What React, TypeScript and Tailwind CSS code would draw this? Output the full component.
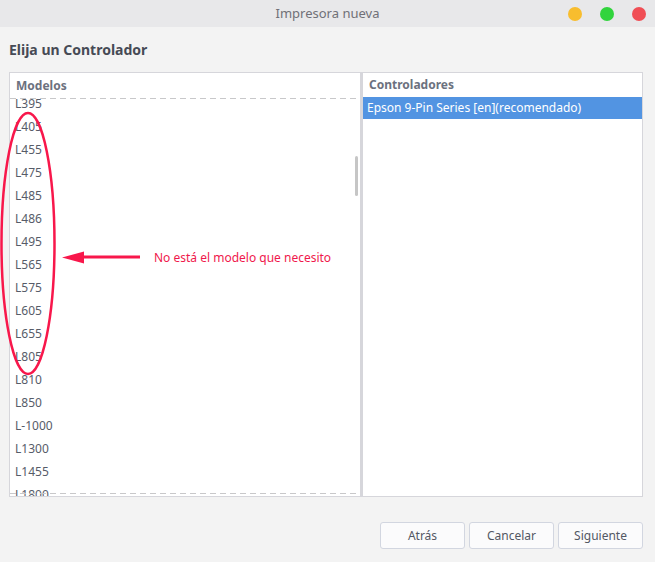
import React from "react";

const models = [
  "L395", "L405", "L455", "L475", "L485", "L486", "L495", "L565", "L575",
  "L605", "L655", "L805", "L810", "L850", "L-1000", "L1300", "L1455", "L1800",
];

export default function App() {
  return (
    <div
      className="relative w-[655px] h-[562px] bg-[#f3f3f3] overflow-hidden"
      style={{ fontFamily: '"Noto Sans", "Open Sans", sans-serif' }}
    >
      {/* Title bar */}
      <div className="relative h-[27px] bg-[#e8e8ea] flex items-center justify-center">
        <span className="text-[13px] text-[#707077]">Impresora nueva</span>
        <div className="absolute right-[9px] top-[7px] flex gap-[18px]">
          <span className="block w-[14px] h-[14px] rounded-full bg-[#f8bd2e]" />
          <span className="block w-[14px] h-[14px] rounded-full bg-[#31d43d]" />
          <span className="block w-[14px] h-[14px] rounded-full bg-[#f04e55]" />
        </div>
      </div>

      {/* Heading */}
      <div className="h-[45px] flex items-center pl-[9px]">
        <span className="text-[14px] font-bold text-[#464a55]">Elija un Controlador</span>
      </div>

      {/* Panels */}
      <div className="flex pl-[9px] h-[425px]">
        {/* Left panel */}
        <div className="relative w-[353px] h-full bg-white border border-[#d6d6db] border-r-[2px] flex flex-col">
          <div className="h-[25px] flex items-center pl-[6px]">
            <span className="text-[12px] font-bold text-[#6c717e]">Modelos</span>
          </div>
          <div className="relative flex-1 overflow-hidden mr-[2px]">
            <div className="mt-[-6px] flex flex-col">
              {models.map((m) => (
                <div key={m} className="h-[23px] flex items-center pl-[5px] text-[12px] text-[#575c69]">
                  {m}
                </div>
              ))}
            </div>
            <div className="absolute left-0 right-0 top-0 h-px bg-[repeating-linear-gradient(to_right,#c8c8ca_0_6px,transparent_6px_10px)]" />
            <div className="absolute left-0 right-0 bottom-[2px] h-px bg-[repeating-linear-gradient(to_right,#c8c8ca_0_6px,transparent_6px_10px)]" />
          </div>
          <div className="absolute left-[345px] top-[83px] w-[3px] h-[40px] rounded-full bg-[#c6c6c6]" />
        </div>

        {/* Right panel */}
        <div className="w-[281px] h-full bg-white border border-[#d6d6db] flex flex-col">
          <div className="h-[24px] flex items-center pl-[6px]">
            <span className="text-[12px] font-bold text-[#6c717e]">Controladores</span>
          </div>
          <div className="h-[22px] bg-[#5294e2] flex items-center pl-[4px]">
            <span className="text-[12px] text-white">Epson 9-Pin Series [en](recomendado)</span>
          </div>
        </div>
      </div>

      {/* Buttons */}
      <div className="flex justify-end gap-[4px] pr-[12px] pt-[25px]">
        {["Atrás", "Cancelar", "Siguiente"].map((b) => (
          <button
            key={b}
            className="w-[85px] h-[27px] rounded-[3px] border border-[#d2d6e0] bg-[#fbfbfc] text-[12px] text-[#535864]"
          >
            {b}
          </button>
        ))}
      </div>

      {/* Annotation overlay */}
      <svg className="absolute left-0 top-0 pointer-events-none" width="655" height="562">
        <ellipse cx="28" cy="243.5" rx="26.5" ry="130.5" fill="none" stroke="#f8174b" strokeWidth="2.5" />
        <line x1="80" y1="257" x2="140" y2="257" stroke="#f8174b" strokeWidth="3" />
        <polygon points="62,257.5 84,251.5 84,263.5" fill="#f8174b" />
      </svg>
      <span className="absolute left-[154px] top-[249px] text-[12px] text-[#f0184c] leading-[18px]">
        No está el modelo que necesito
      </span>
    </div>
  );
}
